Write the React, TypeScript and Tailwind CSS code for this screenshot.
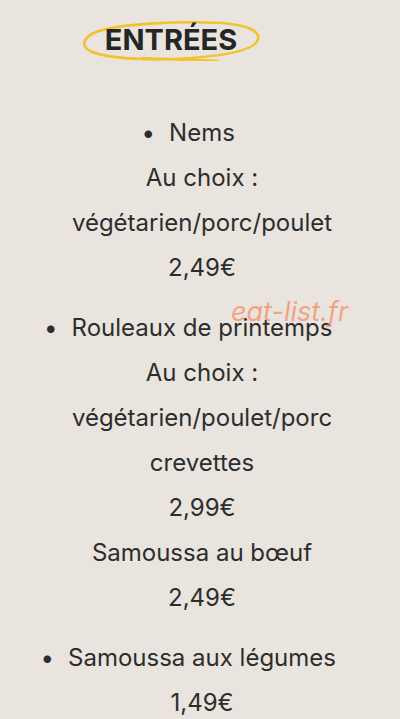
import React from 'react';

const items: string[][] = [
  ['Nems', 'Au choix :', 'végétarien/porc/poulet', '2,49€'],
  [
    'Rouleaux de printemps',
    'Au choix :',
    'végétarien/poulet/porc',
    'crevettes',
    '2,99€',
    'Samoussa au bœuf',
    '2,49€',
  ],
  ['Samoussa aux légumes', '1,49€'],
];

export default function App() {
  return (
    <div
      className="relative min-h-[719px] w-[400px] overflow-hidden bg-[#e9e5de] text-[#2d2d2d]"
      style={{ fontFamily: 'Inter, "Noto Sans", sans-serif' }}
    >
      <div className="pt-[19px]">
        <div className="relative ml-[82px] flex h-[42px] w-[178px] items-center justify-center">
          <svg
            className="absolute inset-0"
            width="178"
            height="42"
            viewBox="0 0 178 42"
            fill="none"
          >
            <path
              d="M14 13 C 40 4, 100 2, 140 4 C 165 6, 178 12, 176 20 C 174 30, 150 36, 110 39 C 70 42, 25 40, 8 32 C -2 26, 2 18, 14 13 M 60 39 C 90 41, 120 41, 136 42"
              stroke="#f2c230"
              strokeWidth="2.6"
              strokeLinecap="round"
            />
          </svg>
          <h2 className="relative text-[29px] font-bold text-[#252525]">ENTRÉES</h2>
        </div>
      </div>

      <ul className="mt-[49px] pl-[4px] text-center text-[24px] leading-[45px]">
        {items.map((lines, i) => (
          <li key={i} className="mb-[15px]">
            {lines.map((l, j) => (
              <React.Fragment key={j}>
                {j > 0 && <br />}
                {j === 0 ? (
                  <span className="relative">
                    <span className="absolute right-full mr-[14px]">•</span>
                    {l}
                  </span>
                ) : (
                  l
                )}
              </React.Fragment>
            ))}
          </li>
        ))}
      </ul>

      <div className="absolute left-[231px] top-[292px] text-[27px] italic text-[#f2936a]/80">
        eat-list.fr
      </div>
    </div>
  );
}
